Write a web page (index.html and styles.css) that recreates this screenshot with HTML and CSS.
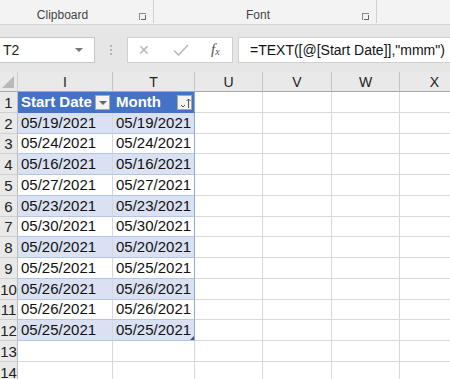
FILE: index.html
```html
<!DOCTYPE html>
<html lang="en">
<head>
    <meta charset="UTF-8">
    <title>Sheet</title>
    <link rel="stylesheet" href="styles.css">
</head>
<body>
    <!-- Ruban (bas des groupes) -->
    <div class="ribbon">
        <div class="group group-clip">
            <span class="group-label">Clipboard</span>
            <span class="launcher"></span>
        </div>
        <div class="group group-font">
            <span class="group-label">Font</span>
            <span class="launcher"></span>
        </div>
    </div>

    <!-- Barre de formule -->
    <div class="formula-bar">
        <div class="name-box">
            <span>T2</span>
            <span class="nb-arrow"></span>
        </div>
        <div class="dots"><i></i><i></i><i></i></div>
        <div class="fx-buttons">
            <span class="fx-btn cancel">&#x2715;</span>
            <span class="fx-btn enter">
                <svg width="16" height="12" viewBox="0 0 16 12"><path d="M1 6.5 L5.5 11 L15 1" fill="none" stroke="#b9b9b9" stroke-width="1.6"/></svg>
            </span>
            <span class="fx-btn fx"><i>f</i><small>x</small></span>
        </div>
        <div class="formula-input">=TEXT([@[Start Date]],"mmm")</div>
    </div>

    <!-- Feuille -->
    <div class="sheet">
        <div class="corner"><span class="corner-tri"></span></div>
        <div class="ch">I</div>
        <div class="ch">T</div>
        <div class="ch">U</div>
        <div class="ch">V</div>
        <div class="ch">W</div>
        <div class="ch last">X</div>

        <div class="rh">1</div>
        <div class="c th">Start Date<span class="filter-btn"><span class="filter-tri"></span></span></div>
        <div class="c th th-end">Month<span class="filter-btn sort">
            <svg width="12" height="12" viewBox="0 0 12 12"><path d="M2 8 L4 10 L6 8" fill="none" stroke="#555" stroke-width="1"/><path d="M9.5 11 V2 M7.5 4 L9.5 2 L11.5 4" fill="none" stroke="#555" stroke-width="1"/></svg>
        </span></div>
        <div class="c"></div><div class="c"></div><div class="c"></div><div class="c last"></div>

        <div class="rh">2</div>
        <div class="c td band">05/19/2021</div><div class="c td band td-end">05/19/2021</div>
        <div class="c"></div><div class="c"></div><div class="c"></div><div class="c last"></div>

        <div class="rh">3</div>
        <div class="c td">05/24/2021</div><div class="c td td-end">05/24/2021</div>
        <div class="c"></div><div class="c"></div><div class="c"></div><div class="c last"></div>

        <div class="rh">4</div>
        <div class="c td band">05/16/2021</div><div class="c td band td-end">05/16/2021</div>
        <div class="c"></div><div class="c"></div><div class="c"></div><div class="c last"></div>

        <div class="rh">5</div>
        <div class="c td">05/27/2021</div><div class="c td td-end">05/27/2021</div>
        <div class="c"></div><div class="c"></div><div class="c"></div><div class="c last"></div>

        <div class="rh">6</div>
        <div class="c td band">05/23/2021</div><div class="c td band td-end">05/23/2021</div>
        <div class="c"></div><div class="c"></div><div class="c"></div><div class="c last"></div>

        <div class="rh">7</div>
        <div class="c td">05/30/2021</div><div class="c td td-end">05/30/2021</div>
        <div class="c"></div><div class="c"></div><div class="c"></div><div class="c last"></div>

        <div class="rh">8</div>
        <div class="c td band">05/20/2021</div><div class="c td band td-end">05/20/2021</div>
        <div class="c"></div><div class="c"></div><div class="c"></div><div class="c last"></div>

        <div class="rh">9</div>
        <div class="c td">05/25/2021</div><div class="c td td-end">05/25/2021</div>
        <div class="c"></div><div class="c"></div><div class="c"></div><div class="c last"></div>

        <div class="rh">10</div>
        <div class="c td band">05/26/2021</div><div class="c td band td-end">05/26/2021</div>
        <div class="c"></div><div class="c"></div><div class="c"></div><div class="c last"></div>

        <div class="rh">11</div>
        <div class="c td">05/26/2021</div><div class="c td td-end">05/26/2021</div>
        <div class="c"></div><div class="c"></div><div class="c"></div><div class="c last"></div>

        <div class="rh">12</div>
        <div class="c td band">05/25/2021</div><div class="c td band td-end table-corner">05/25/2021</div>
        <div class="c"></div><div class="c"></div><div class="c"></div><div class="c last"></div>

        <div class="rh">13</div>
        <div class="c"></div><div class="c"></div>
        <div class="c"></div><div class="c"></div><div class="c"></div><div class="c last"></div>

        <div class="rh">14</div>
        <div class="c"></div><div class="c"></div>
        <div class="c"></div><div class="c"></div><div class="c"></div><div class="c last"></div>
    </div>
</body>
</html>
```

FILE: styles.css
```css
/* Remise à zéro */
* {
    margin: 0;
    padding: 0;
    box-sizing: border-box;
}

body {
    font-family: "Liberation Sans", Arial, sans-serif;
    background: #e6e6e6;
    width: 450px;
    height: 379px;
    overflow: hidden;
    color: #000;
}

/* Ruban */
.ribbon {
    display: flex;
    height: 25px;
    background: #f3f3f3;
    border-bottom: 1px solid #d6d6d6;
}

.group {
    display: flex;
    align-items: flex-end;
    padding-bottom: 1px;
    border-right: 1px solid #cfcfcf;
    height: 23px;
}

.group-clip {
    width: 154px;
}

.group-font {
    width: 223px;
}

.group-label {
    flex: 1;
    text-align: center;
    font-size: 12px;
    color: #444;
    line-height: 14px;
}

.group-clip .group-label {
    padding-right: 14px;
}

.launcher {
    width: 7px;
    height: 7px;
    margin: 0 7px 2px 0;
    border-left: 1px solid #888;
    border-top: 1px solid #888;
    position: relative;
}

.launcher::after {
    content: "";
    position: absolute;
    left: 1px;
    top: 1px;
    width: 4px;
    height: 4px;
    border-right: 1px solid #666;
    border-bottom: 1px solid #666;
}

/* Barre de formule */
.formula-bar {
    display: flex;
    align-items: center;
    padding: 11px 0 9px;
    height: 47px;
}

.name-box {
    width: 95px;
    height: 26px;
    background: #fff;
    border: 1px solid #c6c6c6;
    border-left: none;
    display: flex;
    align-items: center;
    justify-content: space-between;
    padding: 0 11px 0 3px;
    font-size: 14px;
    color: #222;
}

.nb-arrow {
    width: 0;
    height: 0;
    border-left: 4px solid transparent;
    border-right: 4px solid transparent;
    border-top: 4px solid #777;
}

.dots {
    width: 32px;
    display: flex;
    flex-direction: column;
    align-items: center;
    gap: 2px;
}

.dots i {
    width: 2px;
    height: 2px;
    background: #b5b5b5;
}

.fx-buttons {
    width: 106px;
    height: 26px;
    background: #fff;
    border: 1px solid #d0d0d0;
    display: flex;
    align-items: center;
    padding-left: 9px;
}

.fx-btn {
    display: flex;
    align-items: center;
    justify-content: center;
    color: #b5b5b5;
}

.cancel {
    width: 14px;
    font-size: 14px;
}

.enter {
    width: 16px;
    margin-left: 22px;
}

.fx {
    margin-left: 22px;
    font-family: "Liberation Serif", serif;
    color: #555;
    font-size: 15px;
}

.fx small {
    font-size: 10px;
    font-style: italic;
    margin-top: 4px;
}

.formula-input {
    flex: 1;
    height: 26px;
    margin-left: 5px;
    background: #fff;
    border: 1px solid #d0d0d0;
    border-right: none;
    padding-left: 11px;
    display: flex;
    align-items: center;
    font-size: 14px;
    color: #111;
    white-space: nowrap;
}

/* Feuille */
.sheet {
    display: grid;
    grid-template-columns: 18px 95px 82px 68px 69px 68px 70px;
    grid-template-rows: 20px repeat(14, 20.75px);
    background: #fff;
}

.corner {
    background: #e9e9e9;
    border-right: 1px solid #cfcfcf;
    border-bottom: 1px solid #a8a8a8;
    position: relative;
}

.corner-tri {
    position: absolute;
    right: 3px;
    bottom: 3px;
    width: 0;
    height: 0;
    border-left: 12px solid transparent;
    border-bottom: 12px solid #b9b9b9;
}

.ch {
    background: #e9e9e9;
    border-right: 1px solid #c4c4c4;
    border-bottom: 1px solid #a8a8a8;
    text-align: center;
    font-size: 14px;
    line-height: 21px;
    color: #222;
}

.rh {
    background: #e9e9e9;
    border-right: 1px solid #bdbdbd;
    border-bottom: 1px solid #d0d0d0;
    font-size: 15px;
    color: #222;
    text-align: center;
    display: flex;
    align-items: flex-end;
    justify-content: center;
    padding-bottom: 1px;
    overflow: hidden;
    white-space: nowrap;
}

.c {
    border-right: 1px solid #d9d9d9;
    border-bottom: 1px solid #d9d9d9;
    font-size: 15px;
    display: flex;
    align-items: flex-end;
    padding: 0 0 2px 3px;
    white-space: nowrap;
    position: relative;
}

.c.last {
    border-right: none;
}

/* Tableau Excel */
.th {
    background: #4472c4;
    color: #fff;
    font-weight: bold;
    border-right: 1px solid #4472c4;
    border-bottom: 1px solid #4472c4;
}

.th-end {
    border-right: 1px solid #8ea9db;
}

.filter-btn {
    position: absolute;
    right: 2px;
    top: 3px;
    width: 15px;
    height: 15px;
    background: #f3f3f3;
    border: 1px solid #a9a9a9;
    display: flex;
    align-items: center;
    justify-content: center;
}

.filter-tri {
    width: 0;
    height: 0;
    border-left: 4px solid transparent;
    border-right: 4px solid transparent;
    border-top: 4px solid #666;
}

.td {
    border-right: 1px solid #d0d7e5;
    border-bottom: 1px solid #b4c6e7;
    color: #111;
}

.td-end {
    border-right: 1px solid #8ea9db;
}

.band {
    background: #d9e1f2;
}

.table-corner::after {
    content: "";
    position: absolute;
    right: 0;
    bottom: 0;
    width: 0;
    height: 0;
    border-left: 4px solid transparent;
    border-bottom: 4px solid #2f5597;
}
```
